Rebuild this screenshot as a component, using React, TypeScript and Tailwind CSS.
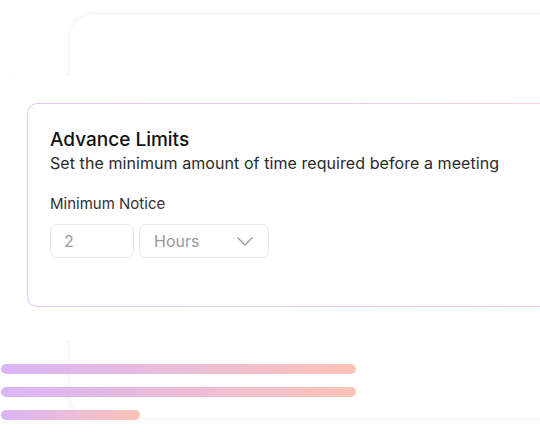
import React from 'react';

const font = { fontFamily: 'Inter, "Noto Sans", sans-serif' };

function Chevron() {
  return (
    <svg width="16" height="9" viewBox="0 0 16 9" fill="none">
      <polyline points="1,1 8,8 15,1" stroke="#9a9a9a" strokeWidth="1.4" strokeLinecap="round" strokeLinejoin="round" />
    </svg>
  );
}

function Bar({ width }: { width: string }) {
  return <div className={`h-[10px] rounded-full bg-gradient-to-r from-[#dab5f7] to-[#fcc2b6] ${width}`} />;
}

export default function App() {
  return (
    <div className="relative w-[540px] h-[433px] overflow-hidden bg-white" style={font}>
      {/* back card */}
      <div className="absolute left-[70px] top-[15px] w-[520px] h-[403px] rounded-[24px] bg-white shadow-[0_0_10px_rgba(0,0,0,0.07)]" />

      {/* settings card */}
      <div className="relative mt-[75px] -ml-[4px] w-[620px] h-[265px] rounded-[22px] bg-white shadow-[0_0_2px_rgba(0,0,0,0.06)] pt-[28px] pl-[31px]">
        <div className="w-[600px] h-[204px] rounded-[10px] p-px bg-gradient-to-r from-[#e4c8f8] to-[#f7d2da]">
          <div className="w-full h-full rounded-[9px] bg-white pt-[24px] pl-[22px]">
            <h2 className="text-[19px] leading-[24px] font-medium text-[#111]">Advance Limits</h2>
            <p className="text-[16px] leading-[22px] tracking-[0.07px] text-[#2a2a2a]">Set the minimum amount of time required before a meeting</p>
            <p className="mt-[20px] text-[15px] leading-[20px] text-[#333]">Minimum Notice</p>
            <div className="mt-[10px] flex gap-[5px]">
              <div className="w-[84px] h-[34px] rounded-[7px] border border-[#f0e6ea] flex items-center pl-[13px] text-[16px] text-[#9a9a9a]">2</div>
              <div className="w-[130px] h-[34px] rounded-[7px] border border-[#f0e6ea] flex items-center justify-between pl-[14px] pr-[15px] text-[16px] text-[#9a9a9a]">
                <span>Hours</span>
                <Chevron />
              </div>
            </div>
          </div>
        </div>
      </div>

      {/* gradient lines */}
      <div className="relative mt-[24px] flex flex-col gap-[13px] pl-px">
        <Bar width="w-[355px]" />
        <Bar width="w-[355px]" />
        <Bar width="w-[139px]" />
      </div>
    </div>
  );
}
